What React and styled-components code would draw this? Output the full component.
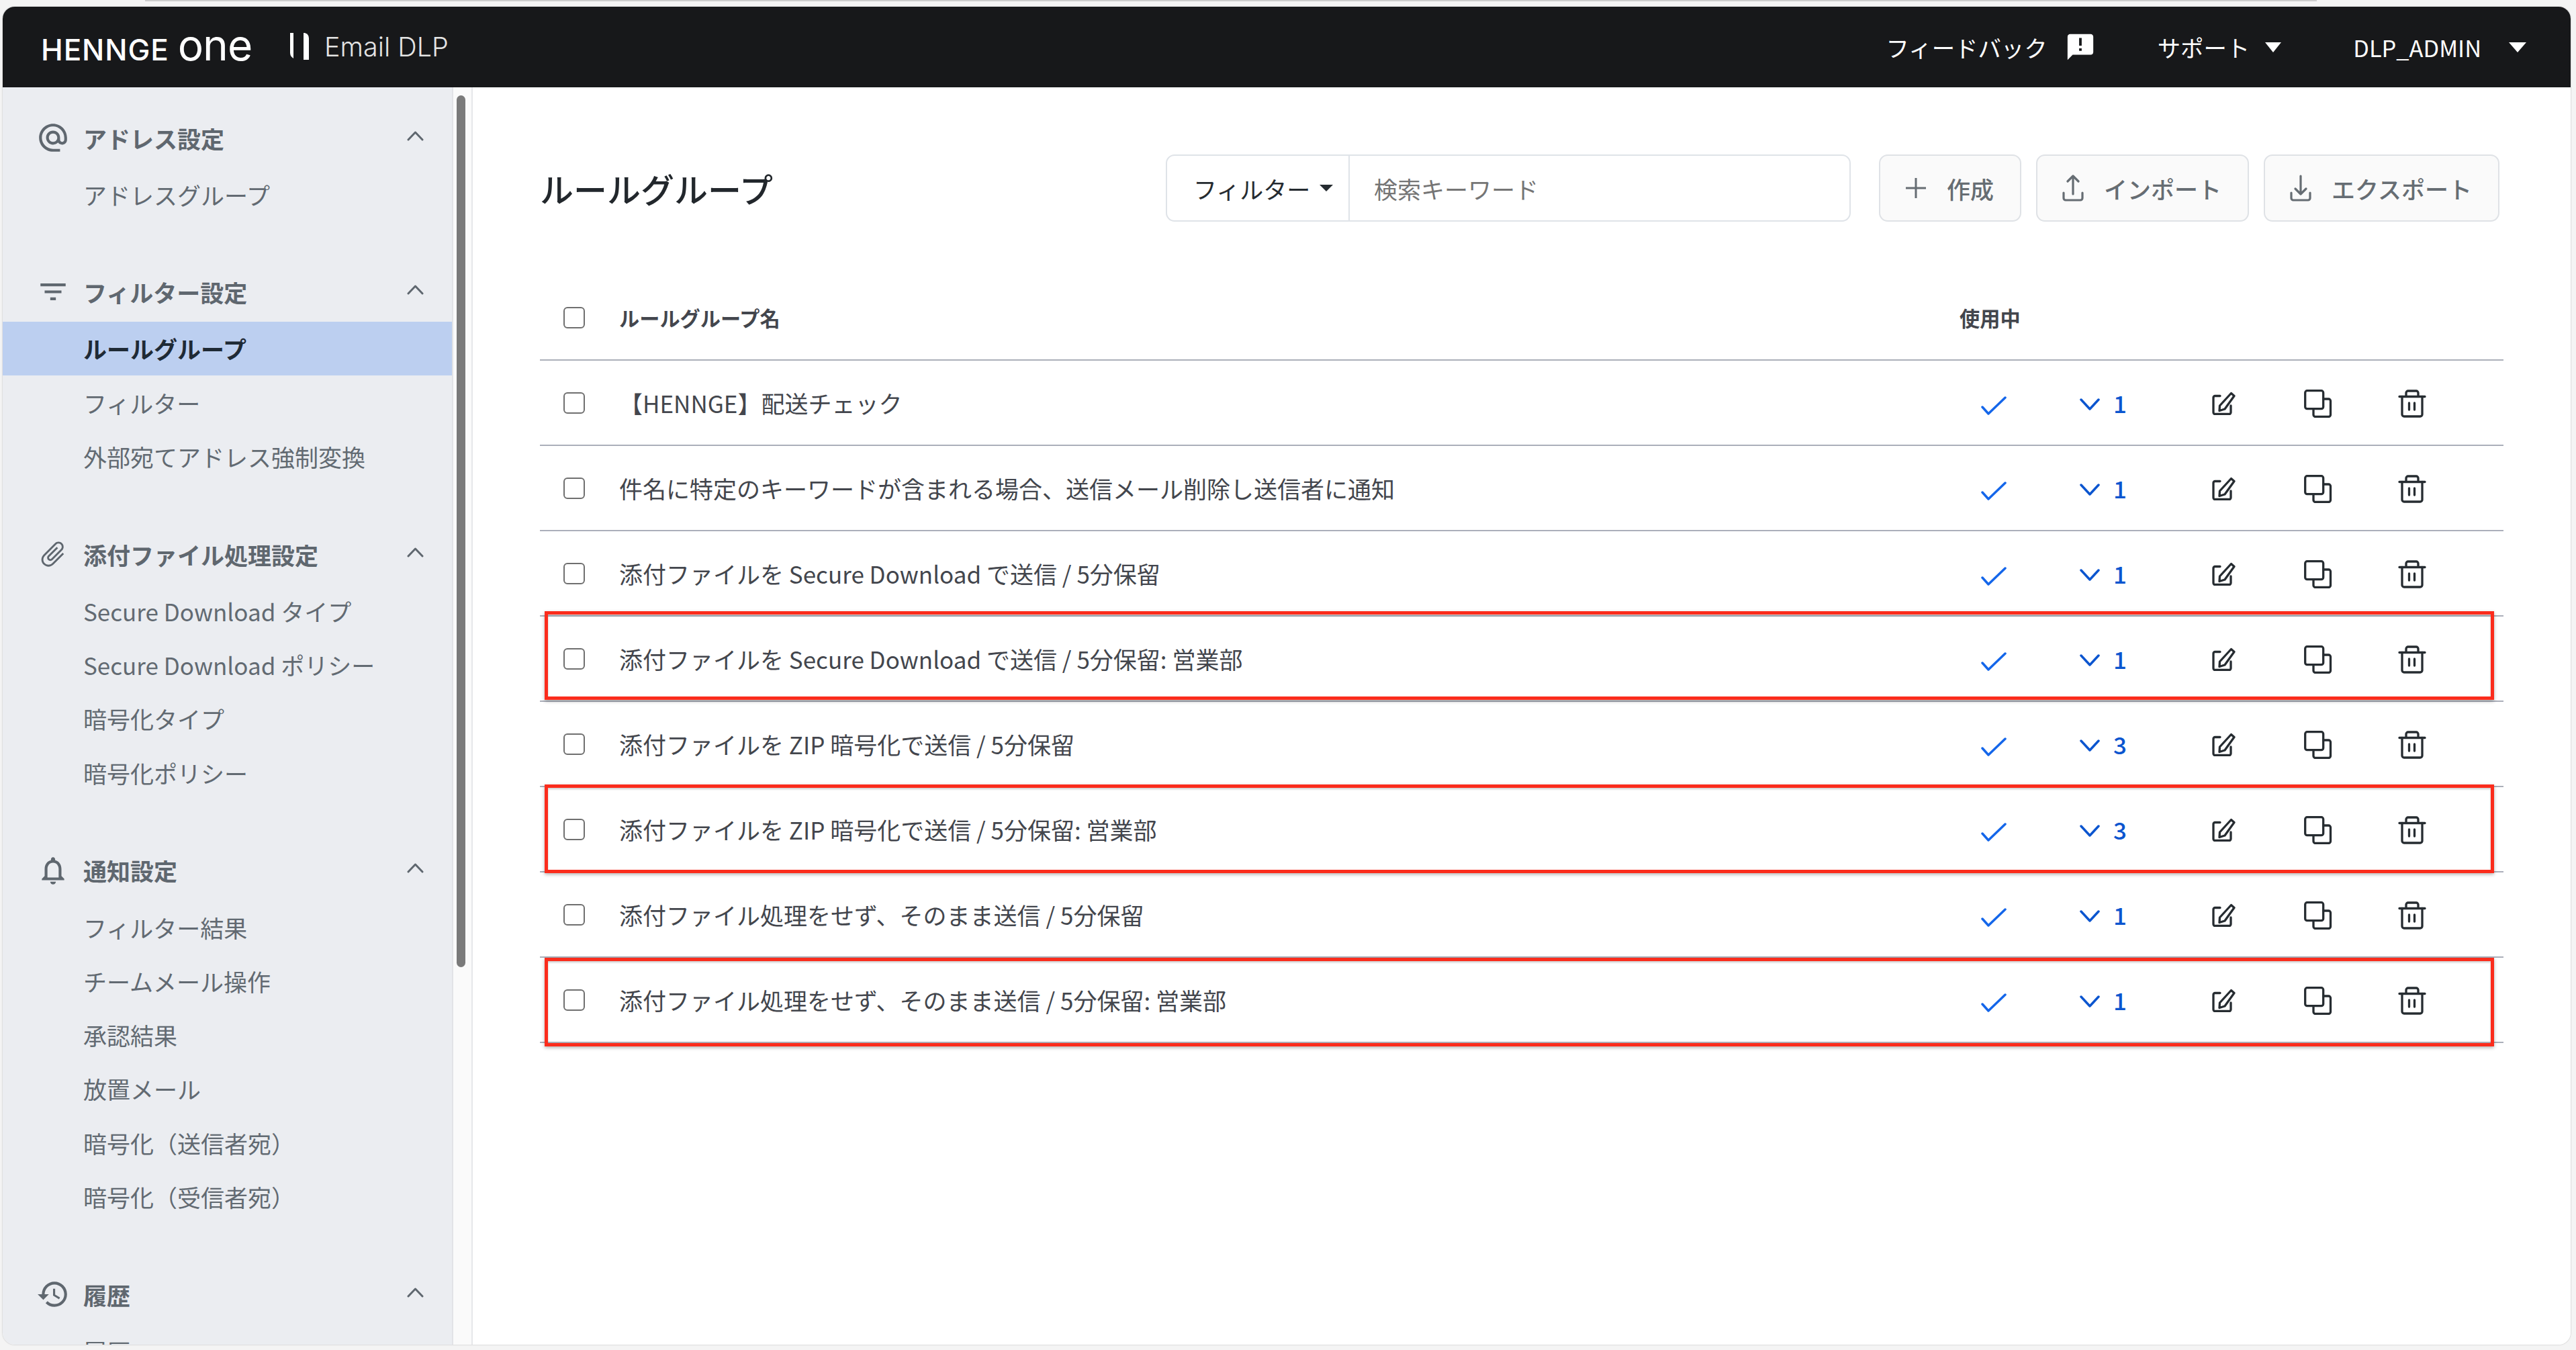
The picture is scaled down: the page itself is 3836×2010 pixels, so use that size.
import React from 'react';
import styled, { createGlobalStyle } from 'styled-components';
import { MdAlternateEmail, MdFilterList, MdAttachFile, MdNotificationsNone, MdHistory, MdAnnouncement } from 'react-icons/md';

const GlobalStyle = createGlobalStyle`
    html, body {
        margin: 0;
        padding: 0;
        background: #f4f4f4;
    }
    * {
        box-sizing: border-box;
    }
    #root {
        height: 2010px;
        overflow: hidden;
    }
`;

const FONT = `"Noto Sans CJK JP", "Noto Sans", sans-serif`;

const Page = styled.div`
    height: 2010px;
    font-family: ${FONT};
    font-size: 35px;
`;

const BrowserEdge = styled.div`
    height: 2px;
    width: 3234px;
    margin-left: 216px;
    background: #cdcdcd;
`;

const Window = styled.div`
    margin: 8px 8px 0 4px;
    height: 1992px;
    border-radius: 18px;
    overflow: hidden;
    background: #fff;
    box-shadow: 0 0 2px rgba(0, 0, 0, 0.3);
    display: flex;
    flex-direction: column;
`;

const TopBar = styled.header`
    height: 120px;
    flex-shrink: 0;
    background: #17181a;
    color: #fff;
    display: flex;
    align-items: center;
    padding: 0 66px 0 57px;
`;

const Logo = styled.div`
    display: flex;
    align-items: baseline;
    font-family: Inter, sans-serif;
    color: #fff;
    width: 371px;
    margin-top: -4px;
    span:first-child {
        font-size: 44px;
        font-weight: 500;
        letter-spacing: 0.9px;
    }
    span:last-child {
        font-size: 64px;
        font-weight: 400;
        letter-spacing: -1px;
        margin-left: 13px;
        line-height: 1;
    }
`;

const LogoBars = styled.svg`
    width: 28px;
    height: 40px;
    margin-right: 23px;
    margin-top: -2px;
`;

const ProductName = styled.div`
    font-family: Inter, sans-serif;
    font-weight: 300;
    font-size: 39.5px;
    color: #e4e4e4;
`;

const TopNav = styled.nav`
    margin-left: auto;
    display: flex;
    align-items: center;
    font-size: 34.4px;
`;

const TopItem = styled.div`
    display: flex;
    align-items: center;
    gap: ${props => props.$gap}px;
    margin-left: ${props => props.$left}px;
`;

const Caret = styled.span`
    display: block;
    width: 0;
    height: 0;
    border-left: ${props => props.$w / 2}px solid transparent;
    border-right: ${props => props.$w / 2}px solid transparent;
    border-top: ${props => props.$h}px solid ${props => props.$color};
`;

const Body = styled.div`
    flex: 1;
    min-height: 0;
    display: flex;
`;

const Sidebar = styled.aside`
    width: 669px;
    flex-shrink: 0;
    background: #ebedf1;
    padding-top: 36px;
    overflow: hidden;
`;

const Gutter = styled.div`
    width: 31px;
    flex-shrink: 0;
    background: #fafafa;
    border-left: 2px solid #e2e3e7;
    border-right: 2px solid #e6e7ea;
    padding: 12px 0 0 5px;
`;

const Thumb = styled.div`
    width: 13px;
    height: 1298px;
    border-radius: 7px;
    background: #7a7a7a;
`;

const Group = styled.section`
    margin-bottom: 66.5px;
`;

const GroupHead = styled.div`
    height: 80px;
    margin-bottom: 3px;
    padding: 0 42px 2px 50px;
    display: flex;
    align-items: center;
    color: #5f676f;
    font-weight: 700;
`;

const GroupIcon = styled.span`
    width: 50px;
    height: 50px;
    margin-right: 20px;
    display: flex;
    align-items: center;
    justify-content: center;
    svg {
        transform: rotate(${props => props.$rotate || 0}deg);
    }
`;

const GroupTitle = styled.span`
    flex: 1;
`;

const GroupChevron = styled.svg`
    width: 25px;
    height: 15px;
    margin-top: -6px;
`;

const MenuItem = styled.div`
    height: 80.3px;
    display: flex;
    align-items: center;
    padding-left: 120px;
    color: ${props => props.$active ? '#1f2a35' : '#626a72'};
    background: ${props => props.$active ? '#bccff0' : 'transparent'};
    font-weight: ${props => props.$active ? 700 : 400};
`;

const Main = styled.main`
    flex: 1;
    min-width: 0;
    padding: 100px 100px 0 100px;
    background: #fff;
`;

const ToolRow = styled.div`
    display: flex;
    align-items: center;
    height: 100px;
    padding-right: 6px;
`;

const Title = styled.h1`
    margin: 0 auto 0 0;
    font-size: 50px;
    font-weight: 500;
    color: #22272c;
`;

const FilterBox = styled.div`
    width: 1020px;
    height: 100px;
    border: 2px solid #dfe3e8;
    border-radius: 13px;
    display: flex;
    margin-right: 42px;
    background: #fff;
`;

const FilterSelect = styled.div`
    width: 272px;
    flex-shrink: 0;
    padding-left: 39px;
    border-right: 2px solid #dfe3e8;
    display: flex;
    align-items: center;
    gap: 14px;
    color: #252b30;
`;

const SearchInput = styled.input`
    flex: 1;
    min-width: 0;
    border: none;
    outline: none;
    background: transparent;
    padding: 0 0 0 36px;
    font: inherit;
    &::placeholder {
        color: #757575;
        opacity: 1;
    }
`;

const ToolButton = styled.button`
    height: 100px;
    margin-left: ${props => props.$first ? 0 : 22}px;
    padding: 0 39px 0 37px;
    border: 2px solid #dfe2e6;
    border-radius: 13px;
    background: #fafafa;
    color: #666d73;
    font: inherit;
    font-weight: 500;
    display: flex;
    align-items: center;
    gap: 30px;
    white-space: nowrap;
`;

const Table = styled.div`
    margin-top: 80px;
`;

const Row = styled.div`
    position: relative;
    height: 127px;
    border-bottom: 2.5px solid #abafba;
    display: grid;
    grid-template-columns: 118px 1996px 179px 197px 137px 140px 1fr;
    align-items: center;
    color: #43464d;
`;

const HeadCell = styled.div`
    font-size: 30.2px;
    font-weight: 700;
`;

const CheckBox = styled.span`
    display: block;
    width: 32px;
    height: 32px;
    margin-left: 35px;
    border: 2.5px solid #6f6f6f;
    border-radius: 6px;
    background: #fff;
`;

const UsedIcon = styled.svg`
    width: 38px;
    height: 28px;
    margin-left: 32px;
    margin-top: 8px;
`;

const CountToggle = styled.div`
    display: flex;
    align-items: center;
    gap: 20px;
    color: #0b55cf;
    font-weight: 500;
`;

const CountChevron = styled.svg`
    width: 30px;
    height: 18px;
    margin-top: 4px;
`;

const ActionIcon = styled.svg`
    display: block;
    margin-top: 2px;
    width: ${props => props.$size}px;
    height: ${props => props.$size}px;
    fill: none;
    stroke: #262c31;
    stroke-width: 3.3;
    stroke-linecap: round;
    stroke-linejoin: round;
`;

const Highlight = styled.div`
    position: absolute;
    left: 7px;
    width: 2903px;
    top: ${props => props.$top}px;
    height: 132px;
    border: 5px solid #fb2c1c;
    box-shadow: 0 2px 5px rgba(0, 0, 0, 0.3), inset 0 2px 3px rgba(0, 0, 0, 0.2);
    pointer-events: none;
`;

const ChevronUp = () => (
    <GroupChevron viewBox="0 0 25 15" fill="none" stroke="#5f676f" strokeWidth="3" strokeLinecap="round" strokeLinejoin="round">
        <path d="M2 13 12.5 2 23 13" />
    </GroupChevron>
);

const groups = [
    { title: 'アドレス設定', icon: <MdAlternateEmail size={50} />, items: ['アドレスグループ'] },
    { title: 'フィルター設定', icon: <MdFilterList size={51} />, items: ['ルールグループ', 'フィルター', '外部宛てアドレス強制変換'] },
    { title: '添付ファイル処理設定', icon: <MdAttachFile size={46} />, rotate: 45, items: ['Secure Download タイプ', 'Secure Download ポリシー', '暗号化タイプ', '暗号化ポリシー'] },
    { title: '通知設定', icon: <MdNotificationsNone size={50} />, items: ['フィルター結果', 'チームメール操作', '承認結果', '放置メール', '暗号化（送信者宛）', '暗号化（受信者宛）'] },
    { title: '履歴', icon: <MdHistory size={50} />, items: ['履歴'] },
];

const rules = [
    { name: '【HENNGE】配送チェック', count: 1 },
    { name: '件名に特定のキーワードが含まれる場合、送信メール削除し送信者に通知', count: 1 },
    { name: '添付ファイルを Secure Download で送信 / 5分保留', count: 1 },
    { name: '添付ファイルを Secure Download で送信 / 5分保留: 営業部', count: 1, mark: -8 },
    { name: '添付ファイルを ZIP 暗号化で送信 / 5分保留', count: 3 },
    { name: '添付ファイルを ZIP 暗号化で送信 / 5分保留: 営業部', count: 3, mark: -4 },
    { name: '添付ファイル処理をせず、そのまま送信 / 5分保留', count: 1 },
    { name: '添付ファイル処理をせず、そのまま送信 / 5分保留: 営業部', count: 1, mark: 0 },
];

export default function App() {
    return (
        <Page>
            <GlobalStyle />
            <BrowserEdge />
            <Window>
                <TopBar>
                    <Logo>
                        <span>HENNGE</span>
                        <span>one</span>
                    </Logo>
                    <LogoBars viewBox="0 0 28 40">
                        <path d="M0 0h5v38L2 35.500Q0 33 0 30z" fill="#fff" />
                        <path d="M20 0h2q6 2 6 8v32h-8z" fill="#fff" />
                    </LogoBars>
                    <ProductName>Email DLP</ProductName>
                    <TopNav>
                        <TopItem $gap={26}>
                            フィードバック
                            <MdAnnouncement size={46} color="#fff" />
                        </TopItem>
                        <TopItem $gap={23} $left={92}>
                            サポート
                            <Caret $w={25} $h={15} $color="#fff" />
                        </TopItem>
                        <TopItem $gap={41} $left={107}>
                            DLP_ADMIN
                            <Caret $w={26} $h={15} $color="#fff" />
                        </TopItem>
                    </TopNav>
                </TopBar>
                <Body>
                    <Sidebar>
                        {groups.map(group => (
                            <Group key={group.title}>
                                <GroupHead>
                                    <GroupIcon $rotate={group.rotate}>{group.icon}</GroupIcon>
                                    <GroupTitle>{group.title}</GroupTitle>
                                    <ChevronUp />
                                </GroupHead>
                                {group.items.map(item => (
                                    <MenuItem key={item} $active={item === 'ルールグループ'}>{item}</MenuItem>
                                ))}
                            </Group>
                        ))}
                    </Sidebar>
                    <Gutter>
                        <Thumb />
                    </Gutter>
                    <Main>
                        <ToolRow>
                            <Title>ルールグループ</Title>
                            <FilterBox>
                                <FilterSelect>
                                    フィルター
                                    <Caret $w={20} $h={10} $color="#252b30" />
                                </FilterSelect>
                                <SearchInput placeholder="検索キーワード" />
                            </FilterBox>
                            <ToolButton $first>
                                <svg width="32" height="32" viewBox="0 0 32 32" stroke="#666d73" strokeWidth="3">
                                    <path d="M16 1v30M1 16h30" />
                                </svg>
                                作成
                            </ToolButton>
                            <ToolButton>
                                <svg width="32" height="40" viewBox="0 0 32 40" fill="none" stroke="#666d73" strokeWidth="3.200" strokeLinecap="round" strokeLinejoin="round">
                                    <path d="M16 29V2M8 10l8-8 8 8M2 27v8a3 3 0 0 0 3 3h22a3 3 0 0 0 3-3v-8" />
                                </svg>
                                インポート
                            </ToolButton>
                            <ToolButton>
                                <svg width="32" height="40" viewBox="0 0 32 40" fill="none" stroke="#666d73" strokeWidth="3.200" strokeLinecap="round" strokeLinejoin="round">
                                    <path d="M16 2v27M8 21l8 8 8-8M2 27v8a3 3 0 0 0 3 3h22a3 3 0 0 0 3-3v-8" />
                                </svg>
                                エクスポート
                            </ToolButton>
                        </ToolRow>
                        <Table>
                            <Row>
                                <CheckBox />
                                <HeadCell>ルールグループ名</HeadCell>
                                <HeadCell>使用中</HeadCell>
                            </Row>
                            {rules.map(rule => (
                                <Row key={rule.name}>
                                    <CheckBox />
                                    <div>{rule.name}</div>
                                    <UsedIcon viewBox="0 0 38 28" fill="none" stroke="#1466ea" strokeWidth="3.500" strokeLinecap="round" strokeLinejoin="round">
                                        <path d="M2 16l9 10L36 2" />
                                    </UsedIcon>
                                    <CountToggle>
                                        <CountChevron viewBox="0 0 30 18" fill="none" stroke="#0b55cf" strokeWidth="3.500" strokeLinecap="round" strokeLinejoin="round">
                                            <path d="M2 2l13 14L28 2" />
                                        </CountChevron>
                                        {rule.count}
                                    </CountToggle>
                                    <ActionIcon $size={35} viewBox="0 0 35 35">
                                        <path d="M12 6.500H4.500a2.500 2.500 0 0 0-2.500 2.500v22a2.500 2.500 0 0 0 2.500 2.500h21a2.500 2.500 0 0 0 2.500-2.500v-10" />
                                        <path d="M28.500 2.500l4.500 4-14 19.500-8 2.500 .5-7.500z" />
                                    </ActionIcon>
                                    <ActionIcon $size={42} viewBox="0 0 42 42">
                                        <rect x="1.700" y="1.700" width="27" height="27" rx="3" />
                                        <path d="M29 14h7.500a3 3 0 0 1 3 3v20.500a3 3 0 0 1-3 3H17a3 3 0 0 1-3-3V29" />
                                    </ActionIcon>
                                    <ActionIcon $size={42} viewBox="0 0 42 42">
                                        <path d="M2 10.500h38M12 10V5a3 3 0 0 1 3-3h12a3 3 0 0 1 3 3v5" />
                                        <path d="M6 10.500V37a3 3 0 0 0 3 3h24a3 3 0 0 0 3-3V10.500M16.500 20v10M24.500 20v10" />
                                    </ActionIcon>
                                    {rule.mark !== undefined && <Highlight $top={rule.mark} />}
                                </Row>
                            ))}
                        </Table>
                    </Main>
                </Body>
            </Window>
        </Page>
    );
}
